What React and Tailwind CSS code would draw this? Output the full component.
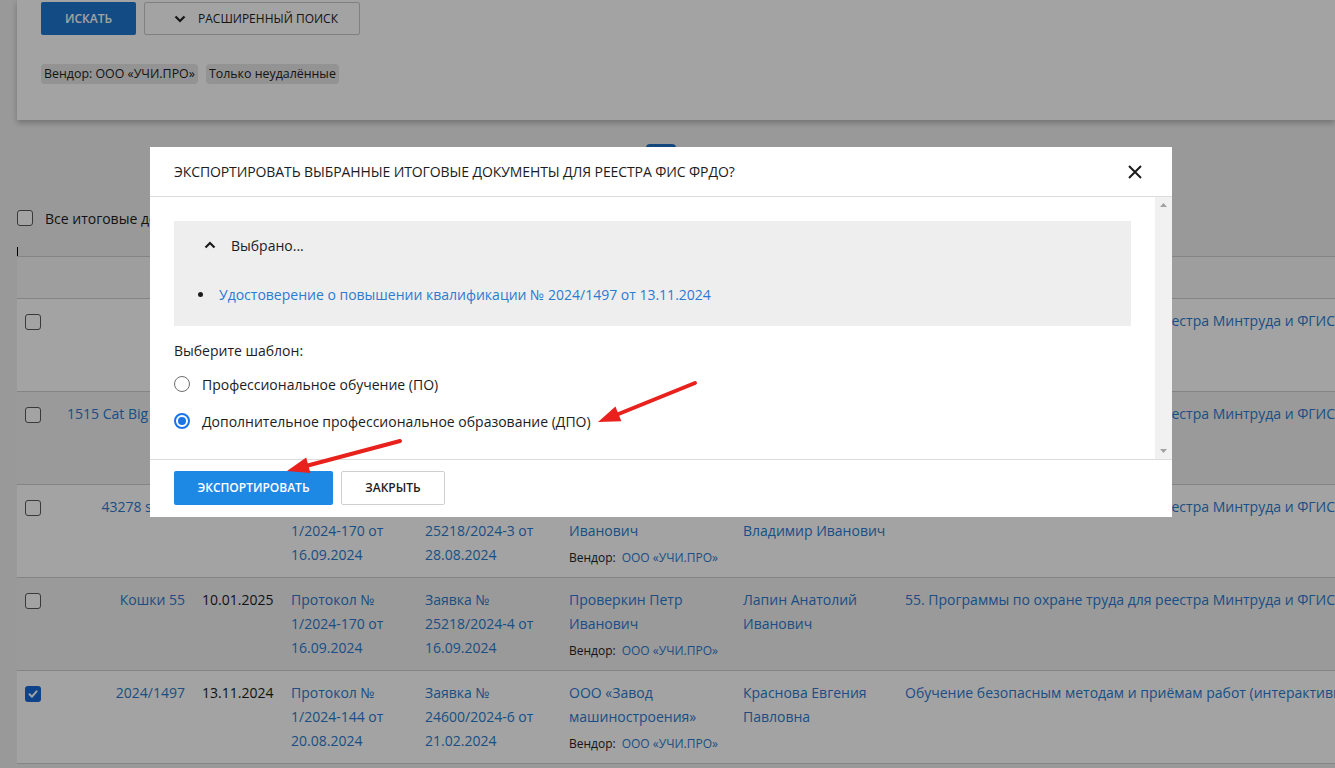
import React from "react";

const LINK = "text-[#2b7bd0]";

function Check({ checked }) {
  if (checked) {
    return (
      <div className="w-[16px] h-[16px] rounded-[3px] bg-[#1769d6] flex items-center justify-center">
        <svg width="12" height="12" viewBox="0 0 12 12">
          <path d="M2.5 6.3 L5 8.7 L9.6 3.3" fill="none" stroke="white" strokeWidth="2" strokeLinecap="round" strokeLinejoin="round" />
        </svg>
      </div>
    );
  }
  return <div className="w-[16px] h-[16px] rounded-[3px] border border-[#5a5a5a] bg-white" />;
}

function Vendor() {
  return (
    <div className="h-[24px] pt-[3px] text-[12px] leading-[24px] whitespace-nowrap">
      <span className="text-[#222]">Вендор:</span>
      <span className={`${LINK} ml-[6px]`}>ООО «УЧИ.ПРО»</span>
    </div>
  );
}

function Row({ striped, checked, num, date, proto, zayavka, person, teacher, program }) {
  return (
    <div className={`flex border-t border-[#cfcfcf] py-[10px] ${striped ? "bg-[#f1f1f1]" : "bg-white"}`}>
      <div className="w-[32px] shrink-0 pl-[8px] pt-[5px]">
        <Check checked={checked} />
      </div>
      <div className={`w-[144px] shrink-0 pr-[8px] text-right ${LINK} leading-[24px] whitespace-nowrap`}>{num}</div>
      <div className="w-[90px] shrink-0 pl-[9px] leading-[24px] text-[#1c1c1c]">{date}</div>
      <div className={`w-[134px] shrink-0 pl-[8px] ${LINK} leading-[24px]`}>
        {proto.map((l, i) => (
          <div key={i}>{l}</div>
        ))}
      </div>
      <div className={`w-[144px] shrink-0 pl-[8px] ${LINK} leading-[24px]`}>
        {zayavka.map((l, i) => (
          <div key={i}>{l}</div>
        ))}
      </div>
      <div className="w-[174px] shrink-0 pl-[8px] leading-[24px]">
        {person.map((l, i) => (
          <div key={i} className={LINK}>
            {l}
          </div>
        ))}
        <Vendor />
      </div>
      <div className={`w-[162px] shrink-0 pl-[8px] ${LINK} leading-[24px]`}>
        {teacher.map((l, i) => (
          <div key={i}>{l}</div>
        ))}
      </div>
      <div className={`shrink-0 pl-[8px] ${LINK} leading-[24px] whitespace-nowrap`}>{program}</div>
    </div>
  );
}

const PROG = "55. Программы по охране труда для реестра Минтруда и ФГИС";

export default function App() {
  return (
    <div className="relative w-[1335px] h-[768px] overflow-hidden bg-[#f0f0f0] text-[14px] text-[#1c1c1c] font-['Open_Sans',sans-serif]">
      {/* Search card */}
      <div className="ml-[17px] h-[120px] bg-white shadow-[0_3px_6px_rgba(0,0,0,0.25)] pl-[24px] pt-[2px]">
        <div className="flex gap-[8px]">
          <div className="w-[95px] h-[33px] rounded-[2px] bg-[#1f77d0] text-white text-[12px] font-semibold flex items-center justify-center">
            ИСКАТЬ
          </div>
          <div className="w-[216px] h-[33px] rounded-[2px] border border-[#c8c8c8] bg-white text-[12px] text-[#222] flex items-center justify-center gap-[12px] pl-[8px]">
            <svg width="12" height="8" viewBox="0 0 12 8">
              <path d="M1.5 1.5 L6 6 L10.5 1.5" fill="none" stroke="#222" strokeWidth="2.2" />
            </svg>
            <span>РАСШИРЕННЫЙ ПОИСК</span>
          </div>
        </div>
        <div className="mt-[29px] flex gap-[8px] text-[12.4px] text-[#222]">
          <div className="h-[20px] px-[3px] rounded-[4px] bg-[#e6e6e6] flex items-center">Вендор: ООО «УЧИ.ПРО»</div>
          <div className="h-[20px] px-[3px] rounded-[4px] bg-[#e6e6e6] flex items-center">Только неудалённые</div>
        </div>
      </div>

      {/* pagination */}
      <div className="mt-[24px] ml-[646px] w-[30px] h-[30px] rounded-[4px] bg-[#1f6fc0]" />

      {/* select all */}
      <div className="mt-[36px] ml-[17px] h-[16px] flex items-center gap-[12px]">
        <Check />
        <span className="text-[#1c1c1c] whitespace-nowrap">Все итоговые документы на странице</span>
      </div>
      <div className="mt-[21px] ml-[17px] w-[1px] h-[9px] bg-black" />

      {/* table */}
      <div className="ml-[17px]">
        <div className="h-[42px] border-t border-[#cfcfcf] bg-[#f8f8f8]" />
        <Row
          num=""
          date="09.01.2025"
          proto={["Протокол №", "1/2024-170 от", "16.09.2024"]}
          zayavka={["Заявка №", "25218/2024-1 от", "16.09.2024"]}
          person={["Проверкин Петр", "Иванович"]}
          teacher={["Лапин Анатолий", "Иванович"]}
          program={PROG}
        />
        <Row
          striped
          num="1515 Cat Big Cat 5"
          date="10.01.2025"
          proto={["Протокол №", "1/2024-170 от", "16.09.2024"]}
          zayavka={["Заявка №", "25218/2024-2 от", "16.09.2024"]}
          person={["Проверкин Петр", "Иванович"]}
          teacher={["Лапин Анатолий", "Иванович"]}
          program={PROG}
        />
        <Row
          num="43278 sdfsdf"
          date="10.01.2025"
          proto={["Протокол №", "1/2024-170 от", "16.09.2024"]}
          zayavka={["Заявка №", "25218/2024-3 от", "28.08.2024"]}
          person={["Проверкин Петр", "Иванович"]}
          teacher={["Кузнецов", "Владимир Иванович"]}
          program={PROG}
        />
        <Row
          striped
          num="Кошки 55"
          date="10.01.2025"
          proto={["Протокол №", "1/2024-170 от", "16.09.2024"]}
          zayavka={["Заявка №", "25218/2024-4 от", "16.09.2024"]}
          person={["Проверкин Петр", "Иванович"]}
          teacher={["Лапин Анатолий", "Иванович"]}
          program={PROG}
        />
        <Row
          checked
          num="2024/1497"
          date="13.11.2024"
          proto={["Протокол №", "1/2024-144 от", "20.08.2024"]}
          zayavka={["Заявка №", "24600/2024-6 от", "21.02.2024"]}
          person={["ООО «Завод", "машиностроения»"]}
          teacher={["Краснова Евгения", "Павловна"]}
          program="Обучение безопасным методам и приёмам работ (интерактивный курс)"
        />
        <div className="border-t border-[#cfcfcf]" />
      </div>

      {/* overlay */}
      <div className="absolute inset-0 bg-black/[0.36]" />

      {/* modal */}
      <div className="absolute left-[150px] top-[147px] w-[1022px] h-[370px] bg-white flex flex-col">
        <div className="h-[50px] shrink-0 border-b border-[#dcdcdc] flex items-center justify-between pl-[24px] pr-[30px]">
          <span className="text-[14px] tracking-[-0.1px] text-[#1c1c1c]">ЭКСПОРТИРОВАТЬ ВЫБРАННЫЕ ИТОГОВЫЕ ДОКУМЕНТЫ ДЛЯ РЕЕСТРА ФИС ФРДО?</span>
          <svg width="14" height="14" viewBox="0 0 14 14">
            <path d="M1 1 L13 13 M13 1 L1 13" stroke="#1c1c1c" strokeWidth="2" />
          </svg>
        </div>
        <div className="h-[262px] shrink-0 flex">
          <div className="flex-1 px-[24px] pt-[24px]">
            <div className="h-[105px] bg-[#eeeeee] pl-[30px] pt-[12px]">
              <div className="flex items-center gap-[15px] h-[24px]">
                <svg width="12" height="8" viewBox="0 0 12 8">
                  <path d="M1.5 6.5 L6 2 L10.5 6.5" fill="none" stroke="#1c1c1c" strokeWidth="2.2" />
                </svg>
                <span className="text-[#1c1c1c]">Выбрано...</span>
              </div>
              <div className="mt-[25px] flex items-center h-[24px] -ml-[6px]">
                <span className="w-[5px] h-[5px] rounded-full bg-[#1c1c1c] mr-[16px]" />
                <span className="text-[#2b7bd0]">Удостоверение о повышении квалификации № 2024/1497 от 13.11.2024</span>
              </div>
            </div>
            <div className="mt-[12px] h-[24px] flex items-center text-[#1c1c1c]">Выберите шаблон:</div>
            <div className="mt-[10px] h-[24px] flex items-center gap-[12px] text-[#1c1c1c]">
              <span className="w-[16px] h-[16px] rounded-full border border-[#6f6f6f] bg-white" />
              <span>Профессиональное обучение (ПО)</span>
            </div>
            <div className="mt-[13px] h-[24px] flex items-center gap-[12px] text-[#1c1c1c]">
              <span className="w-[16px] h-[16px] rounded-full border-2 border-[#1a73e8] bg-white flex items-center justify-center">
                <span className="w-[8px] h-[8px] rounded-full bg-[#1a73e8]" />
              </span>
              <span>Дополнительное профессиональное образование (ДПО)</span>
            </div>
          </div>
          <div className="w-[17px] shrink-0 bg-[#f1f1f1] flex flex-col justify-between items-center py-[6px]">
            <svg width="7" height="4" viewBox="0 0 7 4">
              <path d="M0 4 L3.5 0 L7 4 Z" fill="#a3a3a3" />
            </svg>
            <svg width="7" height="4" viewBox="0 0 7 4">
              <path d="M0 0 L3.5 4 L7 0 Z" fill="#a3a3a3" />
            </svg>
          </div>
        </div>
        <div className="flex-1 border-t border-[#dcdcdc] pl-[24px] pt-[11px] flex gap-[8px]">
          <div className="w-[159px] h-[34px] rounded-[2px] bg-[#1e88e5] text-white text-[12px] font-semibold flex items-center justify-center">
            ЭКСПОРТИРОВАТЬ
          </div>
          <div className="w-[104px] h-[34px] rounded-[2px] border border-[#cfcfcf] bg-white text-[#1c1c1c] text-[12px] font-semibold flex items-center justify-center">
            ЗАКРЫТЬ
          </div>
        </div>
      </div>

      {/* annotation arrows */}
      <svg className="absolute inset-0 pointer-events-none" width="1335" height="768">
        <line x1="695" y1="383" x2="616" y2="415" stroke="#e8211d" strokeWidth="4" strokeLinecap="round" />
        <polygon points="598,422 615.4,406.4 621.4,421.2" fill="#e8211d" />
        <line x1="400" y1="441" x2="306" y2="466" stroke="#e8211d" strokeWidth="4" strokeLinecap="round" />
        <polygon points="287,471 306.2,457.6 310.4,473.1" fill="#e8211d" />
      </svg>
    </div>
  );
}
